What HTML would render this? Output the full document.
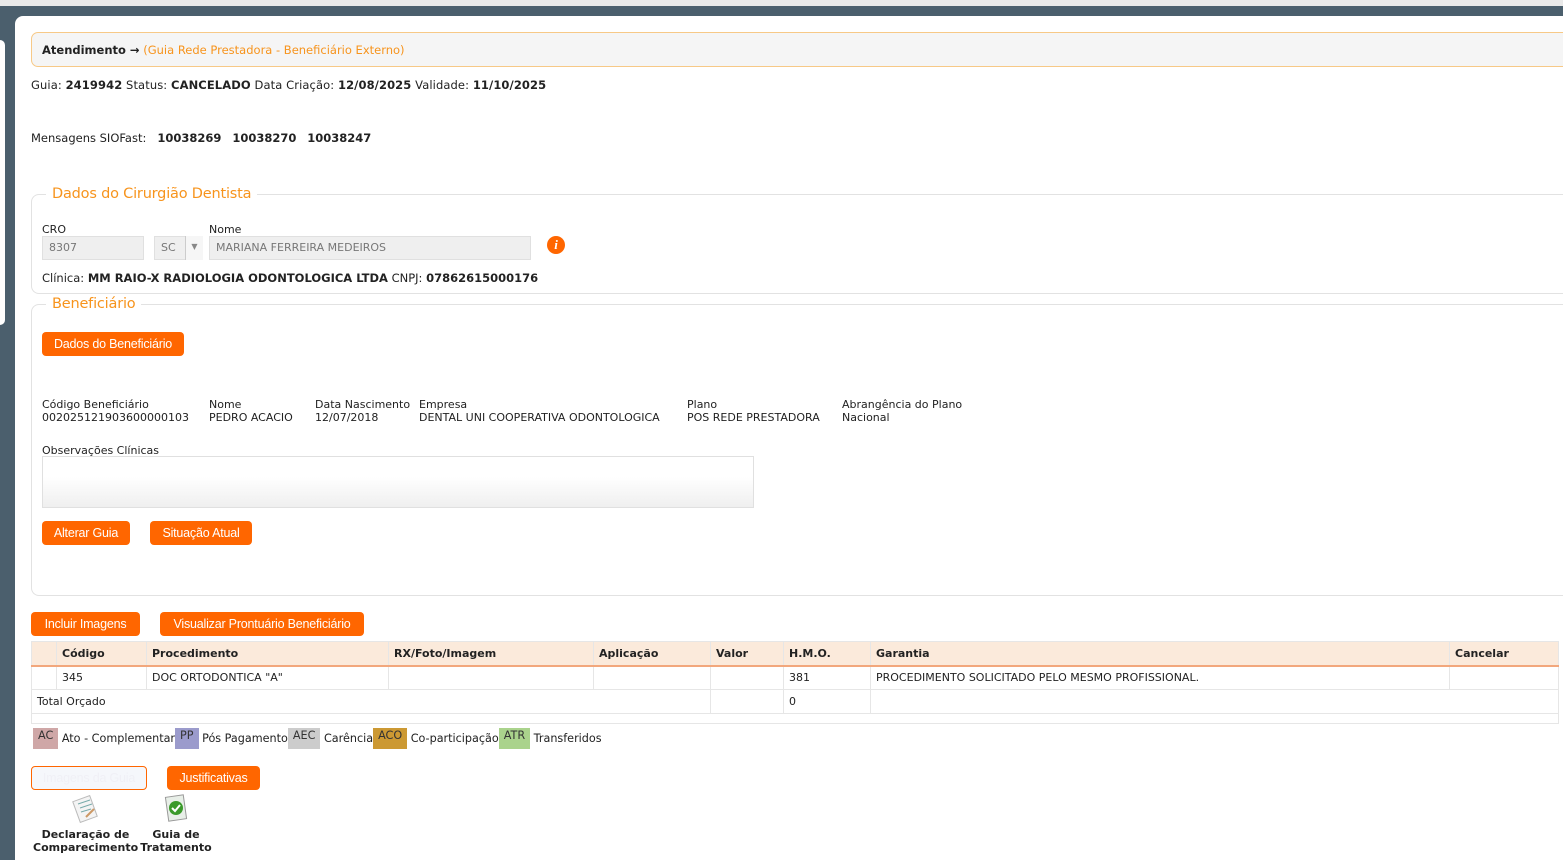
<!DOCTYPE html><html><head><meta charset="utf-8"><style>
*{box-sizing:border-box}body{margin:0;width:1563px;height:860px;overflow:hidden;background:#4b5f6d;font-family:"DejaVu Sans","Liberation Sans",sans-serif;font-size:11px;color:#222;position:relative}
.a{position:absolute;white-space:nowrap}
b{font-weight:bold}
.btn{position:absolute;background:#ff6600;color:#fff;border-radius:4px;height:24px;line-height:24px;font-family:"Liberation Sans",sans-serif;font-size:12.5px;text-align:center;letter-spacing:-.2px}
.fs{position:absolute;border:1px solid #e2e2e2;border-right:none;border-radius:8px 0 0 8px}
.lg{position:absolute;background:#fff;color:#f7941d;font-size:14.5px;padding:0 6px;font-family:"DejaVu Sans",sans-serif;letter-spacing:-.2px}
.inp{position:absolute;background:#efefef;border:1px solid #e0e0e0;color:#777;height:24px;line-height:22px;padding-left:6px}
table{border-collapse:collapse;position:absolute;left:31px;top:641px;width:1528px;font-size:11px}
td,th{border:1px solid #e6e6e6;height:24px;padding:0 5px;text-align:left}
th{background:#fbeadb;font-weight:bold;border-bottom:2px solid #f2a77c}
.lgd{display:inline-block;height:21px;line-height:16px;padding:0 5px;vertical-align:top;color:#333}
</style></head><body>
<div class="a" style="left:0;top:0;width:1563px;height:6px;background:#e9e9e9"></div>
<div class="a" style="left:0;top:40px;width:5px;height:285px;background:#fff;border-radius:0 5px 5px 0"></div>
<div class="a" style="left:15px;top:16px;width:1548px;height:844px;background:#fff;border-radius:8px 0 0 0"></div>
<div class="a" style="left:31px;top:32px;width:1540px;height:35px;background:#f5f5f5;border:1px solid #f7c987;border-radius:7px;line-height:34px;padding-left:10px;font-size:11.5px"><b>Atendimento →</b> <span style="color:#f7941d">(Guia Rede Prestadora - Beneficiário Externo)</span></div>
<div class="a" style="left:31px;top:78px;font-size:11.5px;letter-spacing:.1px">Guia: <b>2419942</b> Status: <b>CANCELADO</b> Data Criação: <b>12/08/2025</b> Validade: <b>11/10/2025</b></div>
<div class="a" style="left:31px;top:131px;font-size:11.5px">Mensagens SIOFast: &nbsp; <b>10038269</b> &nbsp; <b>10038270</b> &nbsp; <b>10038247</b></div>
<div class="fs" style="left:31px;top:194px;width:1540px;height:100px"></div>
<div class="lg" style="left:46px;top:186px">Dados do Cirurgião Dentista</div>
<div class="a" style="left:42px;top:223px">CRO</div><div class="a" style="left:209px;top:223px">Nome</div>
<div class="inp" style="left:42px;top:236px;width:102px">8307</div>
<div class="inp" style="left:154px;top:236px;width:49px">SC<span style="position:absolute;left:30px;top:-1px;width:18px;height:24px;border-left:1px solid #ccc;background:#f6f6f6;color:#888;text-align:center;font-size:8px">▼</span></div>
<div class="inp" style="left:209px;top:236px;width:322px">MARIANA FERREIRA MEDEIROS</div>
<div class="a" style="left:547px;top:236px;width:18px;height:18px;border-radius:50%;background:#f60;color:#fff;text-align:center;line-height:18px;font-weight:bold;font-style:italic;font-family:'Liberation Serif',serif;font-size:13px">i</div>
<div class="a" style="left:42px;top:271px;font-size:11.5px">Clínica: <b>MM RAIO-X RADIOLOGIA ODONTOLOGICA LTDA</b> CNPJ: <b>07862615000176</b></div>
<div class="fs" style="left:31px;top:304px;width:1540px;height:292px"></div>
<div class="lg" style="left:46px;top:296px">Beneficiário</div>
<div class="btn" style="left:42px;top:332px;width:142px">Dados do Beneficiário</div>
<div class="a" style="left:42px;top:398px;line-height:13px">Código Beneficiário<br>002025121903600000103</div>
<div class="a" style="left:209px;top:398px;line-height:13px">Nome<br>PEDRO ACACIO</div>
<div class="a" style="left:315px;top:398px;line-height:13px">Data Nascimento<br>12/07/2018</div>
<div class="a" style="left:419px;top:398px;line-height:13px">Empresa<br>DENTAL UNI COOPERATIVA ODONTOLOGICA</div>
<div class="a" style="left:687px;top:398px;line-height:13px">Plano<br>POS REDE PRESTADORA</div>
<div class="a" style="left:842px;top:398px;line-height:13px">Abrangência do Plano<br>Nacional</div>
<div class="a" style="left:42px;top:444px">Observações Clínicas</div>
<div class="a" style="left:42px;top:456px;width:712px;height:52px;border:1px solid #e0e0e0;background:linear-gradient(#fff 40%,#efefef)"></div>
<div class="btn" style="left:42px;top:521px;width:88px">Alterar Guia</div>
<div class="btn" style="left:150px;top:521px;width:102px">Situação Atual</div>
<div class="btn" style="left:31px;top:612px;width:109px">Incluir Imagens</div>
<div class="btn" style="left:160px;top:612px;width:204px">Visualizar Prontuário Beneficiário</div>
<table><tr><th style="width:25px"></th><th style="width:90px">Código</th><th style="width:242px">Procedimento</th><th style="width:205px">RX/Foto/Imagem</th><th style="width:117px">Aplicação</th><th style="width:73px">Valor</th><th style="width:87px">H.M.O.</th><th style="width:579px">Garantia</th><th>Cancelar</th></tr>
<tr><td></td><td>345</td><td>DOC ORTODONTICA "A"</td><td></td><td></td><td></td><td>381</td><td>PROCEDIMENTO SOLICITADO PELO MESMO PROFISSIONAL.</td><td></td></tr>
<tr><td colspan="5">Total Orçado</td><td></td><td>0</td><td colspan="2"></td></tr>
<tr><td colspan="9" style="height:10px"></td></tr></table>
<div class="a" style="left:33px;top:728px;line-height:21px;font-size:11.2px"><span class="lgd" style="background:#cfa7a7">AC</span> Ato - Complementar<span class="lgd" style="background:#9b9bcc">PP</span> Pós Pagamento<span class="lgd" style="background:#cccccc">AEC</span> Carência<span class="lgd" style="background:#cc9933">ACO</span> Co-participação<span class="lgd" style="background:#aad38c">ATR</span> Transferidos</div>
<div class="btn" style="left:31px;top:766px;width:116px;background:#f5f7fb;border:1px solid #f60;color:#f0f0f6;line-height:22px">Imagens da Guia</div>
<div class="btn" style="left:167px;top:766px;width:93px">Justificativas</div>
<svg class="a" style="left:72px;top:795px" width="28" height="28"><rect x="4" y="3" width="18" height="22" fill="#f4f4f4" stroke="#bbb" transform="rotate(-20 13 14)"/><g stroke="#7aa" stroke-width="1"><line x1="6" y1="9" x2="18" y2="5"/><line x1="8" y1="13" x2="20" y2="9"/><line x1="9" y1="17" x2="19" y2="14"/></g><line x1="14" y1="22" x2="22" y2="14" stroke="#c96" stroke-width="2"/></svg>
<svg class="a" style="left:163px;top:793px" width="28" height="30"><rect x="4" y="3" width="18" height="24" fill="#e8efe8" stroke="#999" transform="rotate(-8 13 15)"/><circle cx="13" cy="15" r="7" fill="#3a9a2a"/><path d="M9 15l3 3 5-6" stroke="#fff" stroke-width="2" fill="none"/></svg>
<div class="a" style="left:33px;top:828px;font-weight:bold;text-align:center;line-height:13px;width:105px">Declaração de<br>Comparecimento</div>
<div class="a" style="left:138px;top:828px;font-weight:bold;text-align:center;line-height:13px;width:76px">Guia de<br>Tratamento</div>
</body></html>
